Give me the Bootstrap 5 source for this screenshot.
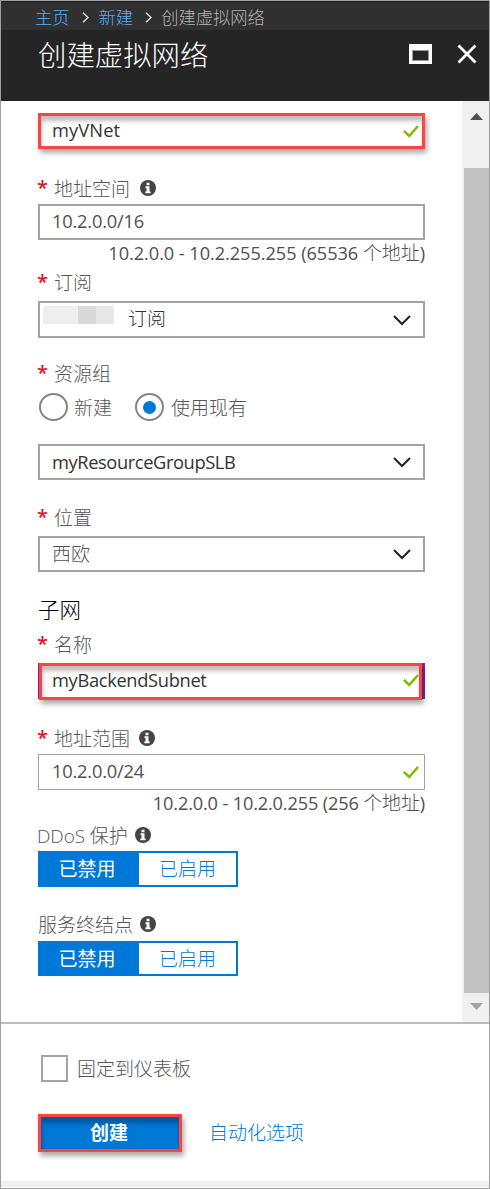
<!DOCTYPE html>
<html lang="zh-CN">
<head>
<meta charset="utf-8">
<meta name="viewport" content="width=device-width, initial-scale=1">
<title>创建虚拟网络</title>
<link rel="stylesheet" href="https://cdn.jsdelivr.net/npm/bootstrap@5.3.0/dist/css/bootstrap.min.css">
<style>
body{font-family:"Open Sans","Noto Sans CJK SC",sans-serif;font-size:19px;font-weight:300;line-height:24px;color:#505050;background:#fff;white-space:nowrap}
.blade{height:1189px;border:1px solid #a0a0a0}
.crumbs{height:29px;background:#303030;border-top:1px solid #1c1c1c;font-size:17.3px;padding:3px 0 0 34px;color:#b4b4b4}
.crumbs a{color:#55b0ff;text-decoration:none}
.crumbs svg{margin:0 10px 0 12px}
.crumbs span{margin-left:-1px}
.titlebar{height:71px;background:#252525;color:#fff;padding:7px 12px 0 37px}
.titlebar h1{font-size:28.4px;font-weight:300;line-height:36px;margin:0}
.titlebar svg{margin-top:7px}
.titlebar .win{margin-right:25px}
.pane{height:921px}
.form-area{width:387px;margin-left:37px;padding-top:12px}
.field-box{height:36px;border:2px solid #a3a3a3;padding:0 4px 2px 12px;background:#fff}
.field-box.drop{padding-right:12px;padding-bottom:1px}
.field-box svg{margin-top:2px}
.dark{color:#333}
.field-box.marked{border:3px solid #fd4444;padding:0 3px 2px 11px;box-shadow:2px 4px 5px rgba(0,0,0,.33),inset 1px 5px 4px rgba(0,0,0,.25)}
.focused{height:36px;background:#7e2c9c;padding:0 3px 0 1px}
.focused .field-box.marked{height:37px;padding:0 0 4px 10px}
.thin{border-width:1.5px;padding-left:13px}
.thin svg{margin-right:1px}
.cap{height:24px;color:#555;padding-top:1px}
.req{color:#e81123;font-size:20px;width:17px;font-weight:600;line-height:24px;margin:-1px 0 0 -1px}
.hint{height:24px;text-align:right;font-size:18.2px;font-weight:400;letter-spacing:-.06px}
.hint.short{letter-spacing:-.16px}
.hint span{font-weight:300;font-size:19px}
.lat{letter-spacing:-.2px;font-size:18.3px;font-weight:400}
.names{letter-spacing:-.4px}
.redact{width:78px;height:18px}
.field-box .redact{margin:-8px 7px 0 -9px}
.circle{width:29px;height:28px;border:2px solid #858585;border-radius:50%}
.circle i{width:13px;height:13px;border-radius:50%;background:#0078d7}
.switcher{width:200px;height:36px;border:2px solid #0078d7;color:#0078d7}
.switcher .on{width:99px;background:#0078d7;color:#fff;font-weight:400;padding-right:5px}
.switcher span{line-height:33px;text-align:center}
.track{width:27px;background:#f0f0f0;padding:12px 0 12px 2px}
.thumb{background:#c1c1c1;margin:48px 0 10px}
.bottom{height:165px;border-top:2px solid #bbb;border-bottom:6px solid #f0f0f0;padding:31px 0 0 37px}
.tick{width:27px;height:27px;border:2px solid #a3a3a3;margin:-1px 9px 0 3px}
.create{width:144px;height:38px;border:3px solid #fd4444!important;background:#0078d7!important;color:#fff!important;font-weight:700;line-height:30px;border-radius:0;padding:0 2px 0 0;font-size:19px;box-shadow:2px 4px 5px rgba(0,0,0,.33),inset 1px 6px 5px rgba(0,0,0,.28)}
.link-auto{color:#0078d7;text-decoration:none;margin-left:27px}
svg{flex:none}
</style>
</head>
<body>
<svg class="d-none">
<symbol id="info" viewBox="0 0 16 16"><circle cx="8" cy="8" r="8" fill="#444"/><path fill="#fff" d="M6.5 2.7h3v2.5h-3zM5.5 6.3h4v5.3h1.2v1.6H5.3v-1.6h1.2V7.9h-1z"/></symbol>
<symbol id="ok" viewBox="0 0 16 13"><path d="M.8 5.8 6.200 11 15 1" fill="none" stroke="#7fba00" stroke-width="2.5"/></symbol>
<symbol id="down" viewBox="0 0 18 11"><path d="M1 1l8 8 8-8" fill="none" stroke="#222" stroke-width="2"/></symbol>
</svg>
<div class="blade d-flex flex-column">
<nav class="crumbs d-flex align-items-center"><a href="#">主页</a><svg width="7" height="11" viewBox="0 0 7 11"><path d="M1 .7 6 5.5 1 10.3" fill="none" stroke="#ddd" stroke-width="1.5"/></svg><a href="#">新建</a><svg width="7" height="11" viewBox="0 0 7 11"><path d="M1 .7 6 5.5 1 10.3" fill="none" stroke="#ddd" stroke-width="1.5"/></svg><span>创建虚拟网络</span></nav>
<header class="titlebar d-flex align-items-start"><h1 class="me-auto">创建虚拟网络</h1><svg class="win" width="23" height="20"><path d="M0 0h23v20H0z" fill="#fff"/><path d="M3.500 6.500h16v10h-16z" fill="#252525" stroke="#999"/></svg><svg width="20" height="20"><path d="M1.500 1.500l17 17m0-17-17 17" stroke="#fff" stroke-width="2.800"/></svg></header>
<div class="pane d-flex justify-content-between">
<main class="form-area">
<div class="field-box marked dark d-flex align-items-center"><span class="me-auto lat" style="letter-spacing:.1px">myVNet</span><svg width="16" height="13"><use href="#ok"/></svg></div>
<div class="cap d-flex align-items-center" style="margin-top:27px"><span class="req">*</span>地址空间<svg style="margin:-2px 0 0 10px" width="16" height="16"><use href="#info"/></svg></div>
<div class="field-box d-flex align-items-center" style="margin-top:4px"><span class="lat">10.2.0.0/16</span></div>
<div class="hint" style="margin-top:1px">10.2.0.0 - 10.2.255.255 (65536 <span>个地址</span>)</div>
<div class="cap d-flex align-items-center" style="margin-top:5px"><span class="req">*</span>订阅</div>
<div class="field-box drop dark d-flex align-items-center" style="margin-top:7px;height:37px"><svg class="redact"><path fill="#eee" d="M0 0h36v18H0z"/><path fill="#d9d9d9" d="M35 0h18v18H35z"/><path fill="#e7e7e7" d="M53 0h18v18H53z"/></svg><span class="me-auto">订阅</span><svg width="18" height="11"><use href="#down"/></svg></div>
<div class="cap d-flex align-items-center" style="margin-top:23px"><span class="req">*</span>资源组</div>
<div class="d-flex align-items-center cap" style="height:28px;margin-top:8px"><span class="circle" style="margin:-1px 6px 0 1px"></span>新建<span class="circle d-flex align-items-center justify-content-center" style="margin:-1px 7px 0 23px"><i></i></span>使用现有</div>
<div class="field-box drop dark d-flex align-items-center" style="margin-top:23px"><span class="me-auto lat names">myResourceGroupSLB</span><svg width="18" height="11"><use href="#down"/></svg></div>
<div class="cap d-flex align-items-center" style="margin-top:25px"><span class="req">*</span>位置</div>
<div class="field-box drop d-flex align-items-center" style="margin-top:7px"><span class="me-auto">西欧</span><svg width="18" height="11"><use href="#down"/></svg></div>
<h2 class="m-0 text-black" style="font-size:21.5px;font-weight:300;line-height:28px;padding-top:24px;height:60px">子网</h2>
<div class="cap d-flex align-items-center"><span class="req">*</span>名称</div>
<div class="focused" style="margin-top:7px"><div class="field-box marked dark d-flex align-items-center"><span class="me-auto lat" style="letter-spacing:-.33px">myBackendSubnet</span><svg width="16" height="13"><use href="#ok"/></svg></div></div>
<div class="cap d-flex align-items-center" style="margin-top:27px"><span class="req">*</span>地址范围<svg style="margin:-2px 0 0 9px" width="16" height="16"><use href="#info"/></svg></div>
<div class="field-box thin d-flex align-items-center" style="margin-top:4px"><span class="me-auto lat">10.2.0.0/24</span><svg width="16" height="13"><use href="#ok"/></svg></div>
<div class="hint short" style="margin-top:1px">10.2.0.0 - 10.2.0.255 (256 <span>个地址</span>)</div>
<div class="cap d-flex align-items-center" style="margin-top:8px"><span style="margin-left:-1px;letter-spacing:-.1px">DDoS 保护</span><svg style="margin:-2px 0 0 7px" width="16" height="16"><use href="#info"/></svg></div>
<div class="switcher d-flex" style="margin-top:4px"><span class="on">已禁用</span><span class="flex-fill">已启用</span></div>
<div class="cap d-flex align-items-center" style="margin-top:25px">服务终结点<svg style="margin:-2px 0 0 7px" width="16" height="16"><use href="#info"/></svg></div>
<div class="switcher d-flex" style="margin-top:5px;height:35px"><span class="on">已禁用</span><span class="flex-fill">已启用</span></div>
</main>
<aside class="track d-flex flex-column"><svg class="align-self-center" width="13" height="7"><path d="M0 7 6.500 0 13 7z" fill="#505050"/></svg><div class="thumb flex-fill"></div><svg class="align-self-center" width="13" height="7"><path d="M0 0h13L6.500 7z" fill="#a3a3a3"/></svg></aside>
</div>
<footer class="bottom">
<div class="cap d-flex align-items-center" style="height:27px"><span class="tick"></span>固定到仪表板</div>
<div class="d-flex align-items-center" style="margin-top:32px"><button class="btn create" type="button">创建</button><a class="link-auto" href="#">自动化选项</a></div>
</footer>
</div>
<script src="https://cdn.jsdelivr.net/npm/bootstrap@5.3.0/dist/js/bootstrap.bundle.min.js"></script>
</body>
</html>
